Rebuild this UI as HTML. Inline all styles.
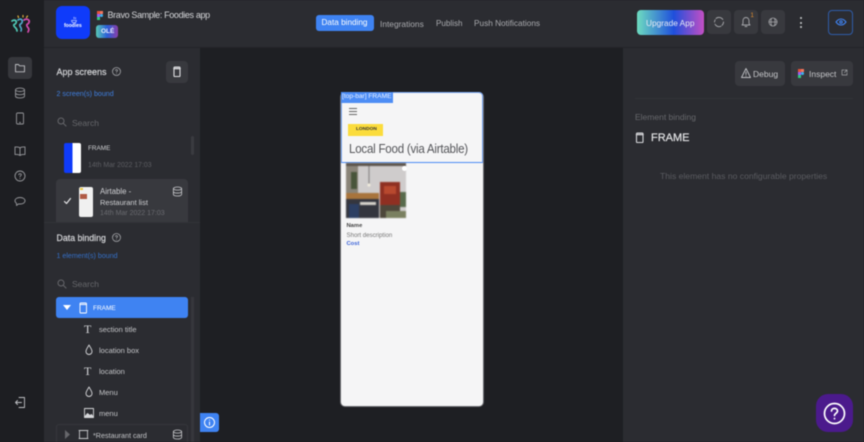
<!DOCTYPE html>
<html><head><meta charset="utf-8"><style>
*{box-sizing:border-box}
html,body{margin:0;padding:0;width:864px;height:442px;overflow:hidden;background:#1e1f23}
body{font-family:"Liberation Sans",sans-serif;position:relative}
#w{position:absolute;left:0;top:0;width:864px;height:442px;filter:blur(.4px);overflow:hidden}
.a{position:absolute}
.t{position:absolute;white-space:nowrap;line-height:1}
.s{-webkit-text-stroke:.2px currentColor}
svg.i{position:absolute;fill:none;stroke-linecap:round;stroke-linejoin:round}
.b{position:absolute;background:#38393e;border-radius:4px}
</style></head><body><div id="w">
<div class="a" style="left:0;top:0;width:44px;height:442px;background:#1d1e22"></div>
<div class="a" style="left:44px;top:0;width:820px;height:48px;background:#2b2c31;border-bottom:1px solid #232428"></div>
<div class="a" style="left:44px;top:48px;width:156px;height:394px;background:#2b2c31"></div>
<div class="a" style="left:200px;top:48px;width:423px;height:394px;background:#1e1f23"></div>
<div class="a" style="left:623px;top:48px;width:241px;height:394px;background:#2b2c31"></div>

<!-- logo -->
<svg class="i" style="left:10px;top:13px" width="22" height="22" viewBox="0 0 22 22">
<path d="M2 8c3-2 5 0 4 2s-3 1-2 3 3 2 3 5" stroke="#4fc9b5" stroke-width="1.700"/>
<path d="M8 7c3-2 5 0 4 2.500s-3 1-2 3.500 2 2 1 5" stroke="#4fa8c9" stroke-width="1.700"/>
<path d="M14 7c3-2 6 0 5 2.500s-3 1-2 3.500 3 2 1 6" stroke="#d44bb0" stroke-width="1.700"/>
<path d="M8 3l.5 1.500M13 2.500v1.500M17.500 3l-1 1.500" stroke="#e0b040" stroke-width="1.200"/>
</svg>
<!-- rail -->
<div class="b" style="left:8px;top:57px;width:24px;height:22px;background:#36373c"></div>
<svg class="i" style="left:14px;top:62px" width="12" height="12" viewBox="0 0 12 12" stroke="#bfc0c4" stroke-width=".9"><path d="M1.500 2.500h3l1 1.300h5v6h-9z"/></svg>
<svg class="i" style="left:14px;top:87px" width="12" height="12" viewBox="0 0 12 12" stroke="#96979b" stroke-width=".9"><ellipse cx="6" cy="2.800" rx="4.500" ry="1.700"/><path d="M1.500 2.800v6.400c0 1 2 1.700 4.500 1.700s4.500-.7 4.500-1.700V2.800M1.500 6c0 1 2 1.700 4.500 1.700S10.500 7 10.500 6"/></svg>
<svg class="i" style="left:14px;top:112px" width="12" height="13" viewBox="0 0 12 13" stroke="#96979b" stroke-width=".9"><rect x="2.500" y="1" width="7" height="11" rx="1"/><path d="M5.500 10.500h1"/></svg>
<svg class="i" style="left:14px;top:145px" width="12" height="12" viewBox="0 0 12 12" stroke="#96979b" stroke-width=".9"><path d="M6 3C5 2 3 1.800 1 2v7.500c2-.2 4 0 5 1 1-1 3-1.200 5-1V2C9 1.800 7 2 6 3zv7.500"/></svg>
<svg class="i" style="left:13px;top:169px" width="14" height="14" viewBox="0 0 14 14" stroke="#96979b" stroke-width=".9"><circle cx="7" cy="7" r="5"/><path d="M5.800 5.800c0-1.500 2.500-1.500 2.500 0 0 1-1.300 1-1.300 2M7 9.500v.1"/></svg>
<svg class="i" style="left:13px;top:195px" width="14" height="13" viewBox="0 0 14 13" stroke="#96979b" stroke-width=".9"><path d="M7 2.500c3 0 5 1.400 5 3.300S10 9 7 9c-.5 0-1 0-1.500-.1L3.500 10.500V8.200C2.500 7.600 2 6.800 2 5.800 2 3.900 4 2.500 7 2.500z"/></svg>
<svg class="i" style="left:14px;top:396px" width="12" height="13" viewBox="0 0 12 13" stroke="#bfc0c4" stroke-width=".9"><path d="M5 1.500h5.500v10H5M7.500 6.500H1.500M3.500 4.500l-2 2 2 2"/></svg>

<!-- header left -->
<div class="a" style="left:56px;top:6px;width:34px;height:33px;background:#0f3bfa;border-radius:6px"></div>
<svg class="i" style="left:70px;top:16px" width="8" height="8" viewBox="0 0 10 9" stroke="#b8c4ff" stroke-width="1"><path d="M2 5h6c0 2-1 3-3 3S2 7 2 5zM5 1v2M7 1.500v1.500"/></svg>
<span class="t" style="left:64px;top:24px;font-size:5px;font-weight:bold;color:#fff">foodies</span>
<svg class="i" style="left:97px;top:11px;stroke:none" width="6" height="9" viewBox="0 0 6 9"><rect x="0" y="0" width="3" height="3" fill="#e8523a"/><rect x="3" y="0" width="3" height="3" fill="#f0765f"/><rect x="0" y="3" width="3" height="3" fill="#9b5ff5"/><circle cx="4.500" cy="4.500" r="1.500" fill="#3ab4f0"/><rect x="0" y="6" width="3" height="3" fill="#2fcb80"/></svg>
<span class="t" style="left:107.500px;top:11px;font-size:9px;letter-spacing:-.35px;color:#d5d6d9">Bravo Sample: Foodies app</span>
<div class="a" style="left:96px;top:25px;width:22px;height:13px;border-radius:3px;background:linear-gradient(90deg,#59c9b5,#2a5fd8 50%,#8a3fa8)"></div>
<span class="t" style="left:101px;top:28.500px;font-size:6.500px;font-weight:bold;color:#e8ecff">OLÉ</span>

<!-- nav -->
<div class="a" style="left:316px;top:15px;width:58px;height:16px;border-radius:3px;background:#3f83f2"></div>
<span class="t" style="left:321.500px;top:18.500px;font-size:8.200px;color:#fff">Data binding</span>
<span class="t" style="left:380px;top:19.500px;font-size:8.400px;color:#a9aaae">Integrations</span>
<span class="t" style="left:436px;top:19.500px;font-size:8.100px;color:#a9aaae">Publish</span>
<span class="t" style="left:474px;top:19.500px;font-size:8.250px;color:#a9aaae">Push Notifications</span>

<!-- header right -->
<div class="a" style="left:637px;top:10px;width:67px;height:25px;border-radius:4px;background:linear-gradient(90deg,#6ddcc0,#1f4fdc 55%,#c44fc4)"></div>
<span class="t" style="left:646px;top:18.500px;font-size:8.300px;color:#e8eaf5">Upgrade App</span>
<div class="b" style="left:707px;top:10px;width:24px;height:24px"></div>
<div class="b" style="left:734px;top:10px;width:24px;height:24px"></div>
<div class="b" style="left:761px;top:10px;width:24px;height:24px"></div>
<svg class="i" style="left:713px;top:16px" width="12" height="12" viewBox="0 0 12 12" stroke="#a6a7ab" stroke-width=".9"><path d="M3 2.500A4.500 4.500 0 0 1 9.800 3.500M10.500 6a4.500 4.500 0 0 1-1.500 3.300M8 10.200A4.500 4.500 0 0 1 2 8.200M1.500 6A4.500 4.500 0 0 1 2.200 3.800"/></svg>
<svg class="i" style="left:740px;top:16px" width="12" height="12" viewBox="0 0 12 12" stroke="#a6a7ab" stroke-width=".9"><path d="M6 1.500c-2 0-3 1.500-3 3.500v2.500L2 9h8L9 7.500V5c0-2-1-3.500-3-3.500zM5 10.500h2"/></svg>
<span class="t" style="left:750.500px;top:13px;font-size:6px;color:#e8912e">1</span>
<svg class="i" style="left:767px;top:16px" width="12" height="12" viewBox="0 0 12 12" stroke="#a6a7ab" stroke-width=".8"><circle cx="6" cy="6" r="4"/><path d="M2 6h8M4.500 2.500C3.500 5 4 8 4.500 9.500M7.500 2.500c1 2.500.5 5.500 0 7"/></svg>
<div class="a" style="left:799.500px;top:17px;width:2px;height:2px;border-radius:50%;background:#c8c9cc"></div>
<div class="a" style="left:799.500px;top:21.500px;width:2px;height:2px;border-radius:50%;background:#c8c9cc"></div>
<div class="a" style="left:799.500px;top:26px;width:2px;height:2px;border-radius:50%;background:#c8c9cc"></div>
<div class="a" style="left:828px;top:10px;width:25px;height:25px;border:1px solid #2f5ca8;border-radius:4px"></div>
<svg class="i" style="left:835px;top:18px" width="12" height="8" viewBox="0 0 12 8" stroke="#3f83f2" stroke-width="1.100"><path d="M1 4c1.500-2 3-3 5-3s3.500 1 5 3c-1.500 2-3 3-5 3S2.500 6 1 4z"/><circle cx="6" cy="4" r="1.200"/></svg>

<!-- App screens -->
<span class="t s" style="left:56.500px;top:67.500px;font-size:9px;color:#d5d6d9">App screens</span>
<svg class="i" style="left:111px;top:66px" width="11" height="11" viewBox="0 0 11 11" stroke="#a6a7ab" stroke-width=".8"><circle cx="5.500" cy="5.500" r="4"/><path d="M4.500 4.500c0-1.200 2-1.200 2 0 0 .8-1 .8-1 1.600M5.500 7.600v.1"/></svg>
<div class="b" style="left:166px;top:61px;width:22px;height:22px"></div>
<svg class="i" style="left:171px;top:65px" width="12" height="13" viewBox="0 0 12 13" stroke="#e0e0e3" stroke-width="1.100"><rect x="3" y="2" width="6" height="9.500" rx=".8"/><path d="M3 3.500h6" stroke-width="1.600"/></svg>
<span class="t" style="left:56.500px;top:90.500px;font-size:7.100px;color:#3f7fe0">2 screen(s) bound</span>
<svg class="i" style="left:57px;top:117px" width="10" height="10" viewBox="0 0 10 10" stroke="#66676b" stroke-width="1"><circle cx="4" cy="4" r="3"/><path d="M6.300 6.300L9 9"/></svg>
<span class="t" style="left:72px;top:118.500px;font-size:8.500px;color:#66676b">Search</span>

<div class="a" style="left:64px;top:143px;width:17px;height:30px;border-radius:2px;background:linear-gradient(90deg,#0f3bfa 51%,#fff 51%)"></div>
<span class="t" style="left:88px;top:145.500px;font-size:6.400px;color:#cfd0d3">FRAME</span>
<span class="t" style="left:88px;top:162.500px;font-size:6.900px;color:#5d5e63">14th Mar 2022 17:03</span>
<div class="a" style="left:191px;top:136px;width:3px;height:19px;border-radius:2px;background:#3a3b40"></div>

<div class="a" style="left:56px;top:179px;width:132px;height:43px;background:#38393e;border-radius:4px 4px 0 0"></div>
<svg class="i" style="left:63px;top:197px" width="9" height="8" viewBox="0 0 9 8" stroke="#e8e8ea" stroke-width="1.200"><path d="M1.500 4.500L3.500 6.500 7.500 1.500"/></svg>
<div class="a" style="left:79px;top:187px;width:14px;height:30px;border-radius:2px;background:#f0f0f0"></div>
<div class="a" style="left:80px;top:188px;width:3px;height:2px;background:#e8c840"></div>
<div class="a" style="left:80px;top:194px;width:7px;height:5px;background:#b05a45"></div>
<span class="t" style="left:100px;top:188px;font-size:7.800px;color:#cfd0d3">Airtable -</span>
<span class="t" style="left:100px;top:199px;font-size:7.500px;color:#cfd0d3">Restaurant list</span>
<span class="t" style="left:100px;top:209.500px;font-size:7px;color:#6a6b70">14th Mar 2022 17:03</span>
<svg class="i" style="left:172px;top:186px" width="11" height="11" viewBox="0 0 12 12" stroke="#c8c9cc" stroke-width=".9"><ellipse cx="6" cy="2.800" rx="4.500" ry="1.700"/><path d="M1.500 2.800v6.400c0 1 2 1.700 4.500 1.700s4.500-.7 4.500-1.700V2.800M1.500 6c0 1 2 1.700 4.500 1.700S10.500 7 10.500 6"/></svg>
<div class="a" style="left:44px;top:222px;width:156px;height:1px;background:#323338"></div>

<!-- Data binding -->
<span class="t s" style="left:56.500px;top:233.500px;font-size:8.800px;color:#d5d6d9">Data binding</span>
<svg class="i" style="left:111px;top:232px" width="11" height="11" viewBox="0 0 11 11" stroke="#a6a7ab" stroke-width=".8"><circle cx="5.500" cy="5.500" r="4"/><path d="M4.500 4.500c0-1.200 2-1.200 2 0 0 .8-1 .8-1 1.600M5.500 7.600v.1"/></svg>
<span class="t" style="left:56.500px;top:252.500px;font-size:7.100px;color:#3570c8">1 element(s) bound</span>
<svg class="i" style="left:57px;top:279px" width="10" height="10" viewBox="0 0 10 10" stroke="#66676b" stroke-width="1"><circle cx="4" cy="4" r="3"/><path d="M6.300 6.300L9 9"/></svg>
<span class="t" style="left:72px;top:280px;font-size:8.500px;color:#66676b">Search</span>
<div class="a" style="left:191px;top:297px;width:3px;height:145px;background:#36373c"></div>
<div class="a" style="left:56px;top:297px;width:132px;height:21px;border-radius:3px;background:#3f83f2"></div>
<svg class="i" style="left:63px;top:305px;stroke:none" width="9" height="6" viewBox="0 0 9 6"><path d="M0 0h8L4 5z" fill="#fff"/></svg>
<svg class="i" style="left:78px;top:302px" width="10" height="12" viewBox="0 0 10 12" stroke="#fff" stroke-width=".9"><rect x="2" y="1" width="6.500" height="10" rx=".8"/><path d="M2 2.500h6.500"/></svg>
<span class="t" style="left:93px;top:305.500px;font-size:6.500px;color:#fff">FRAME</span>

<span class="t" style="left:84px;top:323px;font-size:12px;font-family:'Liberation Serif',serif;color:#d5d6d9">T</span>
<span class="t" style="left:99px;top:325.500px;font-size:7.500px;color:#c4c5c8">section title</span>
<svg class="i" style="left:84px;top:344px" width="10" height="12" viewBox="0 0 10 12" stroke="#d5d6d9" stroke-width=".9"><path d="M5 1C4 3 2 5 2 7.500a3 3 0 0 0 6 0C8 5 6 3 5 1z"/></svg>
<span class="t" style="left:99px;top:346.500px;font-size:7.500px;color:#c4c5c8">location box</span>
<span class="t" style="left:84px;top:365px;font-size:12px;font-family:'Liberation Serif',serif;color:#d5d6d9">T</span>
<span class="t" style="left:99px;top:367.500px;font-size:7.500px;color:#c4c5c8">location</span>
<svg class="i" style="left:84px;top:386px" width="10" height="12" viewBox="0 0 10 12" stroke="#d5d6d9" stroke-width=".9"><path d="M5 1C4 3 2 5 2 7.500a3 3 0 0 0 6 0C8 5 6 3 5 1z"/></svg>
<span class="t" style="left:99px;top:388.500px;font-size:7.500px;color:#c4c5c8">Menu</span>
<svg class="i" style="left:84px;top:408px" width="10" height="10" viewBox="0 0 10 10" stroke="#d5d6d9" stroke-width=".9"><rect x=".5" y=".5" width="9" height="9"/><path d="M.5 9l3-3.500 2.500 2 1.500-1 1.500 2z" fill="#d5d6d9"/></svg>
<span class="t" style="left:99px;top:410px;font-size:7.500px;color:#c4c5c8">menu</span>
<div class="a" style="left:56px;top:424px;width:132px;height:18px;border:1px solid #36373c;border-bottom:0;border-radius:3px 3px 0 0"></div>
<svg class="i" style="left:65px;top:430px;stroke:none" width="5" height="9" viewBox="0 0 5 9"><path d="M0 0l5 4.500L0 9z" fill="#66676b"/></svg>
<svg class="i" style="left:78px;top:429px" width="11" height="11" viewBox="0 0 11 11" stroke="#c4c5c8" stroke-width=".9"><rect x="1.500" y="1.500" width="8" height="8"/><path d="M1 1.500h1M9 1.500h1M1 9.500h1M9 9.500h1"/></svg>
<span class="t" style="left:93px;top:431.500px;font-size:7.200px;color:#c4c5c8">*Restaurant card</span>
<svg class="i" style="left:172px;top:429px" width="11" height="11" viewBox="0 0 12 12" stroke="#c8c9cc" stroke-width=".9"><ellipse cx="6" cy="2.800" rx="4.500" ry="1.700"/><path d="M1.500 2.800v6.400c0 1 2 1.700 4.500 1.700s4.500-.7 4.500-1.700V2.800M1.500 6c0 1 2 1.700 4.500 1.700S10.500 7 10.500 6"/></svg>

<div class="a" style="left:200px;top:413px;width:19px;height:19px;background:#3f83f2;border-radius:0 3px 3px 0"></div>
<svg class="i" style="left:203px;top:416px" width="13" height="13" viewBox="0 0 13 13" stroke="#fff" stroke-width="1"><circle cx="6.500" cy="6.500" r="5"/><path d="M6.500 6v3M6.500 4v.1"/></svg>

<!-- phone -->
<div class="a" style="left:340px;top:92px;width:144px;height:315px;background:#f5f5f6;border-radius:5px;border:1px solid #6a6b70"></div>
<div class="a" style="left:341px;top:92px;width:142px;height:71px;border:1px solid #7aa8f5;border-bottom:1.500px solid #4d8df5;border-radius:4px 4px 0 0"></div>
<div class="a" style="left:341px;top:92px;width:52px;height:11px;background:#4d8df5"></div>
<span class="t" style="left:342px;top:94px;font-size:6.600px;color:#eaf1ff">[top-bar] FRAME</span>
<div class="a" style="left:349px;top:108px;width:8px;height:1.200px;background:#666"></div>
<div class="a" style="left:349px;top:111px;width:8px;height:1.200px;background:#666"></div>
<div class="a" style="left:349px;top:114px;width:8px;height:1.200px;background:#666"></div>
<div class="a" style="left:348px;top:124px;width:35px;height:12px;background:#fbdc3c"></div>
<span class="t" style="left:356px;top:127.500px;font-size:4.800px;font-weight:bold;color:#333">LONDON</span>
<span class="t" style="left:348.500px;top:143px;font-size:12.500px;letter-spacing:-.25px;transform:scaleX(.925);transform-origin:left;color:#55565a">Local Food (via Airtable)</span>
<svg class="a" style="left:346px;top:163px;filter:blur(.6px)" width="60" height="55" viewBox="0 0 60 55">
<rect width="60" height="55" fill="#cfcccc"/>
<rect x="0" y="0" width="60" height="3" fill="#5a524a"/>
<rect x="0" y="3" width="12" height="27" fill="#8a8478"/>
<rect x="5" y="9" width="6" height="17" fill="#48553a"/>
<rect x="0" y="30" width="33" height="6" fill="#a8743c"/>
<rect x="34" y="19" width="20" height="23" fill="#8f2f22"/>
<rect x="38" y="23" width="12" height="8" fill="#b8492f"/>
<rect x="34" y="42" width="20" height="13" fill="#4d473a"/>
<rect x="0" y="36" width="33" height="19" fill="#34363e"/>
<rect x="3" y="41" width="10" height="14" fill="#2c3f63"/>
<rect x="14" y="39" width="16" height="3" fill="#d8d4cc"/>
<rect x="40" y="48" width="20" height="7" fill="#7a8060"/>
<rect x="54" y="29" width="6" height="15" fill="#586a4c"/>
<path d="M23 2v19" stroke="#555" stroke-width=".7"/>
<circle cx="23" cy="22" r="1.500" fill="#f5f0e0"/>
</svg>
<div class="a" style="left:402px;top:166px;width:5px;height:5px;border-radius:50%;background:#fff"></div>
<span class="t" style="left:346.500px;top:224px;font-size:5.800px;font-weight:bold;color:#444">Name</span>
<span class="t" style="left:346.500px;top:233px;font-size:6.100px;color:#777">Short description</span>
<span class="t" style="left:346.500px;top:242px;font-size:5.800px;font-weight:bold;color:#3a62d8">Cost</span>

<!-- right panel -->
<div class="b" style="left:735px;top:61px;width:50px;height:25px"></div>
<svg class="i" style="left:740px;top:67px" width="12" height="12" viewBox="0 0 12 12" stroke="#bfc0c4" stroke-width=".9"><path d="M6 1.500L1.500 10.500h9zM6 5v2.500M6 9v.1"/></svg>
<span class="t" style="left:753px;top:69.500px;font-size:8.500px;color:#c4c5c8">Debug</span>
<div class="b" style="left:791px;top:61px;width:62px;height:25px"></div>
<svg class="i" style="left:798px;top:69px;stroke:none" width="6" height="9" viewBox="0 0 6 9"><rect x="0" y="0" width="3" height="3" fill="#e8523a"/><rect x="3" y="0" width="3" height="3" fill="#f0765f"/><rect x="0" y="3" width="3" height="3" fill="#9b5ff5"/><circle cx="4.500" cy="4.500" r="1.500" fill="#3ab4f0"/><rect x="0" y="6" width="3" height="3" fill="#2fcb80"/></svg>
<span class="t" style="left:809px;top:69.500px;font-size:8.500px;color:#c4c5c8">Inspect</span>
<svg class="i" style="left:841px;top:69px" width="7" height="7" viewBox="0 0 7 7" stroke="#a6a7ab" stroke-width=".7"><path d="M3 1H1v5h5V4M4 1h2v2M6 1L3.500 3.500"/></svg>
<div class="a" style="left:635px;top:98px;width:218px;height:1px;background:#323338"></div>
<span class="t" style="left:635px;top:113px;font-size:8.500px;color:#66676b">Element binding</span>
<svg class="i" style="left:634px;top:131px" width="12" height="13" viewBox="0 0 12 13" stroke="#d5d6d9" stroke-width="1.100"><rect x="2.500" y="2" width="6.500" height="9.500" rx=".8"/><path d="M2.500 3.500h6.500" stroke-width="1.500"/></svg>
<span class="t s" style="left:651px;top:133px;font-size:11px;color:#e2e3e5">FRAME</span>
<span class="t" style="left:660px;top:171.500px;font-size:8.600px;color:#5a5b60">This element has no configurable properties</span>

<div class="a" style="left:816px;top:394px;width:37px;height:38px;border-radius:12px;background:#4b1a8c"></div>
<svg class="i" style="left:822px;top:401px" width="25" height="25" viewBox="0 0 25 25" stroke="#fff" stroke-width="1.700"><circle cx="12.500" cy="12.500" r="10"/><path d="M9.500 10c0-3.500 6-3.500 6 0 0 2.300-3 2.300-3 4.500M12.500 17.500v.2"/></svg>
</div></body></html>
